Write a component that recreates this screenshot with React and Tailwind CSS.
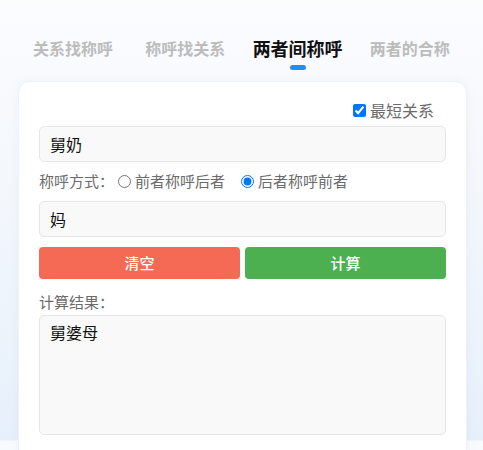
import React, { useState } from "react";

const tabs = ["关系找称呼", "称呼找关系", "两者间称呼", "两者的合称"];

export default function App() {
    const [active, setActive] = useState(2);
    const [mode, setMode] = useState("back");
    const [shortest, setShortest] = useState(true);
    const [first, setFirst] = useState("舅奶");
    const [second, setSecond] = useState("妈");
    const [result, setResult] = useState("舅婆母");

    return (
        <div
            className="h-[450px] overflow-hidden bg-[linear-gradient(to_bottom,#fbfcfe_0px,#f3f7fc_200px,#e6f0fb_440px,#f8fbfe_441px)]"
            style={{ fontFamily: '"Noto Sans CJK SC", "Noto Sans", sans-serif' }}
        >
            {/* 标签栏 */}
            <div className="mx-[17px] pt-[35px] grid grid-cols-4">
                {tabs.map((t, i) => (
                    <button
                        key={t}
                        onClick={() => setActive(i)}
                        className="flex flex-col items-center"
                    >
                        <span
                            className={
                                i === active
                                    ? "h-[26px] leading-[26px] text-[18px] font-bold text-[#111]"
                                    : "h-[26px] leading-[26px] text-[16px] font-semibold text-[#bcbcbc]"
                            }
                        >
                            {t}
                        </span>
                        <span
                            className={
                                i === active
                                    ? "mt-[4px] h-[5px] w-[16px] rounded-full bg-[#1e90f5]"
                                    : "mt-[4px] h-[5px] w-[16px]"
                            }
                        />
                    </button>
                ))}
            </div>

            {/* 卡片 */}
            <div className="mx-[18px] w-[449px] mt-[11px] h-[420px] rounded-[12px] bg-white border border-[#eef2f7] shadow-[0_0_10px_rgba(120,150,190,0.08)] pt-[19px] px-[20px]">
                <div className="h-[18px] flex justify-end items-center pr-[12px]">
                    <label className="flex items-center text-[16px] text-[#6b6b6b]">
                        <input
                            type="checkbox"
                            checked={shortest}
                            onChange={(e) => setShortest(e.target.checked)}
                            className="w-[13px] h-[13px]"
                        />
                        <span className="ml-[4px] leading-[18px]">最短关系</span>
                    </label>
                </div>

                <input
                    value={first}
                    onChange={(e) => setFirst(e.target.value)}
                    className="mt-[7px] block w-full h-[36px] rounded-[5px] border border-[#e6e6e6] bg-[#f9f9f9] px-[10px] text-[16px] text-[#111] outline-none"
                />

                <div className="mt-[9px] h-[20px] flex items-center text-[15px] text-[#6b6b6b]">
                    <span>称呼方式：</span>
                    <label className="ml-[4px] flex items-center">
                        <input
                            type="radio"
                            name="mode"
                            checked={mode === "front"}
                            onChange={() => setMode("front")}
                            className="w-[13px] h-[13px]"
                        />
                        <span className="ml-[4px]">前者称呼后者</span>
                    </label>
                    <label className="ml-[16px] flex items-center">
                        <input
                            type="radio"
                            name="mode"
                            checked={mode === "back"}
                            onChange={() => setMode("back")}
                            className="w-[13px] h-[13px]"
                        />
                        <span className="ml-[4px]">后者称呼前者</span>
                    </label>
                </div>

                <input
                    value={second}
                    onChange={(e) => setSecond(e.target.value)}
                    className="mt-[10px] block w-full h-[36px] rounded-[5px] border border-[#e6e6e6] bg-[#f9f9f9] px-[10px] text-[16px] text-[#111] outline-none"
                />

                <div className="mt-[10px] grid grid-cols-2 gap-[5px]">
                    <button
                        onClick={() => {
                            setFirst("");
                            setSecond("");
                            setResult("");
                        }}
                        className="h-[32px] rounded-[4px] bg-[#f56a55] text-white text-[15px] font-medium"
                    >
                        清空
                    </button>
                    <button className="h-[32px] rounded-[4px] bg-[#4caf50] text-white text-[15px] font-medium">
                        计算
                    </button>
                </div>

                <div className="mt-[13px] h-[20px] leading-[20px] text-[15px] text-[#6b6b6b]">计算结果：</div>

                <textarea
                    value={result}
                    onChange={(e) => setResult(e.target.value)}
                    className="mt-[3px] block w-full h-[120px] resize-none rounded-[5px] border border-[#e6e6e6] bg-[#f9f9f9] px-[10px] py-[4px] text-[16px] text-[#111] outline-none"
                />
            </div>
        </div>
    );
}
